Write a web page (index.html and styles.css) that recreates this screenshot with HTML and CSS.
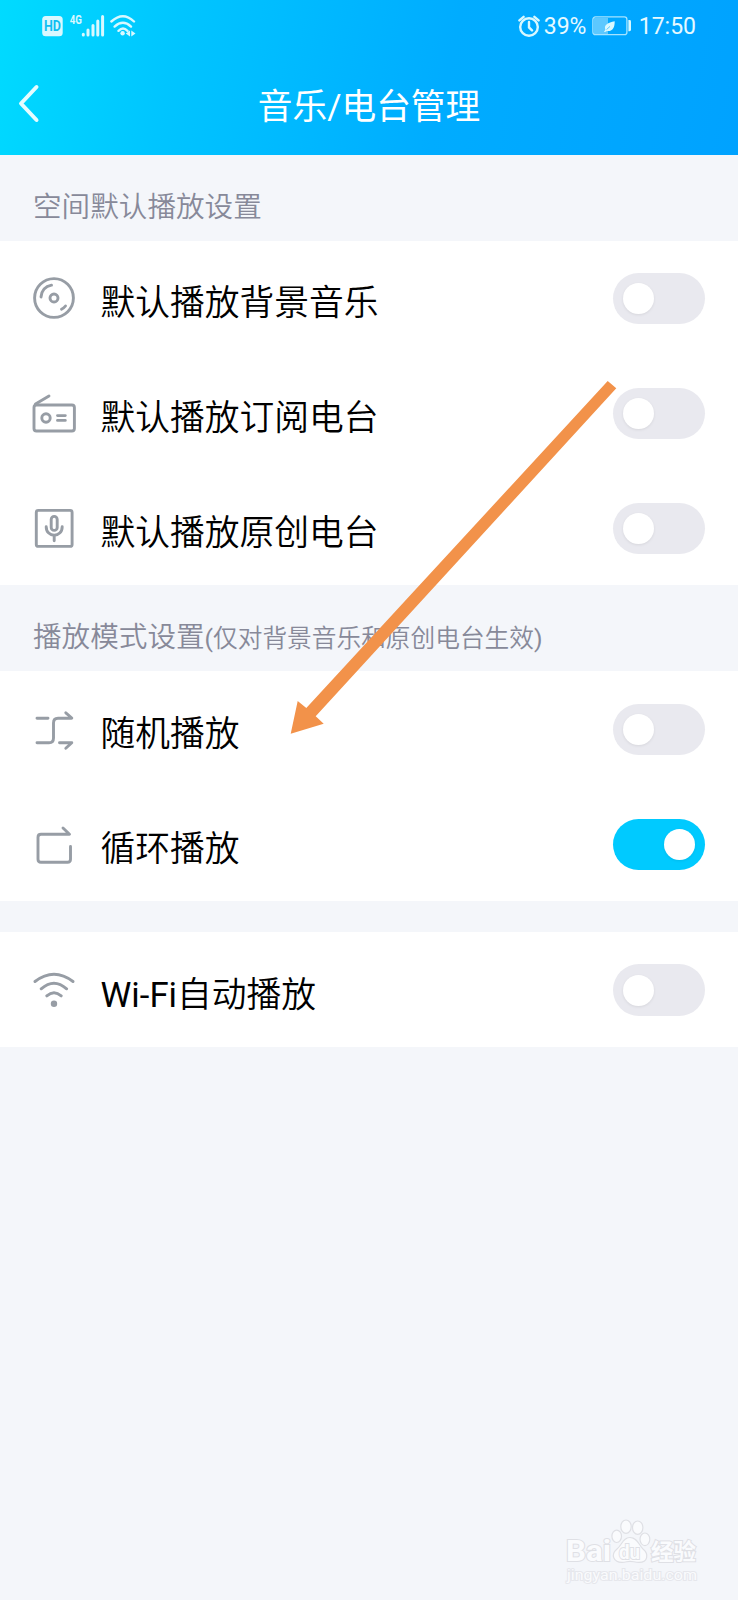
FILE: index.html
```html
<!DOCTYPE html>
<html lang="zh-CN">
<head>
<meta charset="UTF-8">
<meta name="viewport" content="width=device-width, initial-scale=1.0">
<title>音乐/电台管理</title>
<link rel="stylesheet" href="styles.css">
</head>
<body>
    <div class="page">
        <header class="header">
            <div class="status-bar">
                <svg class="status-left" width="96" height="28" viewBox="0 0 96 28">
                    <rect class="solid" x="2.2" y="4" width="20.5" height="20.3" rx="3.5"/>
                    <text class="hd" x="4" y="18.9" textLength="17" lengthAdjust="spacingAndGlyphs">HD</text>
                    <text class="net" x="29.8" y="12.4" textLength="12.2" lengthAdjust="spacingAndGlyphs">4G</text>
                    <path class="bars" d="M43.3 22.3v.6M48 18v4.9M53 13.5v9.4M57.8 9v13.9M62.6 4.6v18.3"/>
                    <path class="waves" d="M71.4 9.5Q83 -1 94 9.5M74.6 14.6Q83 7 91 14.6M78.5 18.8Q83 14.4 87.5 18.8"/>
                    <circle class="solid" cx="82.6" cy="21.3" r="2.2"/>
                    <path class="solid" d="M90 18.4v6l-4.2-3zM91.3 18.4v6l4.2-3z"/>
                </svg>
                <div class="status-right">
                    <svg width="22" height="24" viewBox="0 0 22 24">
                        <circle class="clock" cx="11" cy="13" r="8.8"/>
                        <path class="clock" d="M11 8v5.4l3 3M1.4 6.4l4.2-3.6M20.6 6.4l-4.2-3.6"/>
                    </svg>
                    <span class="percent">39%</span>
                    <svg class="battery" width="40" height="20" viewBox="0 0 40 20">
                        <rect class="battery-level" x="2" y="2" width="14" height="16"/>
                        <rect class="battery-body" x=".9" y=".9" width="34" height="17.8" rx="2.5"/>
                        <path class="solid" d="M36.4 4h1.2q1.4 0 1.4 1.4v8.4q0 1.4-1.4 1.4h-1.2z"/>
                        <path class="solid" d="M12 16l1.4-2.4C11.5 9 16 6.5 22.7 5.2C22.8 11.5 20.5 15.8 15 14.9L13 16z"/>
                        <path class="leaf-vein" d="M14.5 13.6l3.5-3.2"/>
                    </svg>
                    <span class="time">17:50</span>
                </div>
            </div>
            <div class="nav">
                <svg class="back" width="22" height="40" viewBox="0 0 22 40">
                    <path d="M18.5 4L3 20.5 18.5 37"/>
                </svg>
                <h1 class="title">音乐/电台管理</h1>
            </div>
        </header>

        <h2 class="group-title">空间默认播放设置</h2>
        <div class="group">
            <div class="row">
                <svg class="icon" viewBox="0 0 48 48">
                    <circle cx="24" cy="24" r="19.4"/>
                    <circle cx="24" cy="24" r="4"/>
                    <path d="M11 23Q12 13 21.5 11.2M31.5 35.2Q34 34 35.5 32"/>
                </svg>
                <span class="label">默认播放背景音乐</span>
                <span class="switch"></span>
            </div>
            <div class="row">
                <svg class="icon" viewBox="0 0 48 48">
                    <rect x="4" y="16" width="40.4" height="26" rx="2.5"/>
                    <path d="M5.5 15L19 7M27.5 26.6h7.8M27.5 31.4h7.8"/>
                    <circle cx="16" cy="29" r="4.2"/>
                </svg>
                <span class="label">默认播放订阅电台</span>
                <span class="switch"></span>
            </div>
            <div class="row">
                <svg class="icon" viewBox="0 0 48 48">
                    <rect x="6.3" y="6.4" width="35.8" height="36" rx="2"/>
                    <rect x="21.2" y="12.4" width="6" height="14" rx="3"/>
                    <path d="M16.2 22.7C16.2 34 32.2 34 32.2 22.7M24.2 31.5v5.2"/>
                </svg>
                <span class="label">默认播放原创电台</span>
                <span class="switch"></span>
            </div>
        </div>

        <h2 class="group-title">播放模式设置<small><span class="latin">(</span>仅对背景音乐和原创电台生效<span class="latin">)</span></small></h2>
        <div class="group">
            <div class="row">
                <svg class="icon" viewBox="0 0 48 48">
                    <path d="M7 13.2H18M41.5 13.2H28Q23.5 13.2 23.5 18V33Q23.5 37.8 19 37.8H7M35.8 7.8L41.8 13M29.5 37.8H41.8L35.8 43.3"/>
                </svg>
                <span class="label">随机播放</span>
                <span class="switch"></span>
            </div>
            <div class="row">
                <svg class="icon" viewBox="0 0 48 48">
                    <path d="M33 8l6.5 6.2H11Q8 14.2 8 17.2V39.2Q8 42.2 11 42.2H37.5Q40.5 42.2 40.5 39.2V26.5"/>
                </svg>
                <span class="label">循环播放</span>
                <span class="switch on"></span>
            </div>
        </div>

        <div class="group separate">
            <div class="row">
                <svg class="icon" viewBox="0 0 48 48">
                    <path d="M5 15.5Q24 1 43 15.5M11.2 22.8Q24 11.5 36.6 22.8M16.8 29.9Q24 23.5 31.2 29.9"/>
                    <circle class="dot" cx="24" cy="37.8" r="3.2"/>
                </svg>
                <span class="label"><span class="latin">Wi-Fi</span>自动播放</span>
                <span class="switch"></span>
            </div>
        </div>

        <!-- pointer to the shuffle row -->
        <svg class="arrow" width="328" height="356" viewBox="0 0 328 356">
            <path d="M317.7 3L326.3 10.3 25.7 338.3 33.7 345.7 .7 355.7 7.7 323 16.3 330z"/>
        </svg>

        <svg class="watermark" width="142" height="72" viewBox="0 0 142 72">
            <ellipse cx="59.7" cy="17.3" rx="4.8" ry="6.2"/>
            <ellipse cx="69" cy="7.7" rx="5.2" ry="6.7"/>
            <ellipse cx="80.7" cy="8.7" rx="5.2" ry="6.7"/>
            <ellipse cx="87.9" cy="20.3" rx="4.9" ry="6.3"/>
            <path d="M73 18.5C66 18.5 65 26 60 30C53 36 57 43.3 65 43.3C69 43.3 70 42.3 73 42.3C76 42.3 78 43.3 82 43.3C91 43.3 92 35 86 30C82 26 80 18.5 73 18.5Z"/>
            <text class="bai" x="9" y="42" textLength="45" lengthAdjust="spacingAndGlyphs">Bai</text>
            <text class="du" x="62" y="39.5" textLength="21" lengthAdjust="spacingAndGlyphs">du</text>
            <text class="jingyan" x="94" y="41">经验</text>
            <text class="url" x="10" y="60.5" textLength="130" lengthAdjust="spacingAndGlyphs">jingyan.baidu.com</text>
        </svg>
    </div>
</body>
</html>
```
FILE: styles.css
```css
body {
    margin: 0;
    background-color: #f4f6fa;
    font-family: Roboto, "Noto Sans CJK SC", sans-serif;
}

.page {
    position: relative;
    min-height: 1600px;
    overflow: hidden;
}

.header {
    height: 154.5px;
    background: linear-gradient(102deg, #00dbff 0%, #00c5ff 24%, #00acff 60%, #00a2ff 100%);
    color: #fff;
}

.status-bar {
    display: flex;
    justify-content: space-between;
    height: 52px;
    padding: 0 42px 0 40px;
}

.status-left {
    margin-top: 12px;
}

.status-right {
    display: flex;
    align-items: center;
    color: #e6f9ff;
    font-size: 23px;
}

.percent {
    margin-left: 4px;
    width: 48px;
}

.battery {
    width: 40px;
    margin-right: 7px;
}

.solid {
    fill: #d9f8ff;
}

.hd {
    fill: #10bff2;
    font-weight: 700;
    font-size: 14px;
}

.net {
    fill: #d9f8ff;
    font-weight: 700;
    font-size: 12.5px;
}

.bars,
.waves,
.clock {
    fill: none;
    stroke: #d9f8ff;
    stroke-width: 3;
    stroke-linecap: round;
}

.waves,
.clock {
    stroke-width: 2.4;
}

.battery-body {
    fill: none;
    stroke: #a5e3ff;
    stroke-width: 1.3;
}

.battery-level {
    fill: #5cc8ff;
}

.leaf-vein {
    fill: none;
    stroke: #5cc8ff;
}

.nav {
    display: grid;
    grid-template-columns: 60px 1fr 60px;
    align-items: center;
    height: 102px;
}

.back {
    margin-left: 18px;
    fill: none;
    stroke: #e6fcff;
    stroke-width: 4;
    stroke-linecap: round;
    stroke-linejoin: round;
}

.title {
    margin: 7px 0 0;
    font-size: 34.7px;
    font-weight: 400;
    line-height: 50px;
    text-align: center;
}

.group-title {
    box-sizing: border-box;
    height: 86px;
    margin: 0;
    padding: 31px 33px 0;
    color: #878999;
    font-size: 28.6px;
    font-weight: 350;
    line-height: 42px;
}

.group-title small {
    font-size: 24.7px;
}

.latin {
    font-weight: 400;
}

.group {
    background-color: #fff;
}

.separate {
    margin-top: 31px;
}

.row {
    box-sizing: border-box;
    display: flex;
    align-items: center;
    height: 114.9px;
    padding: 1.6px 33px 0 30px;
}

.icon {
    width: 48px;
    height: 48px;
    margin-bottom: 1px;
    fill: none;
    stroke: #979da5;
    stroke-width: 2.9;
    stroke-linecap: round;
    stroke-linejoin: round;
}

.icon .dot {
    fill: #979da5;
    stroke: none;
}

.label {
    flex: 1;
    margin: 8.8px 0 0 22.5px;
    color: #000;
    font-size: 34.75px;
    font-weight: 350;
    line-height: 50px;
}

.switch {
    box-sizing: border-box;
    width: 92px;
    height: 51.5px;
    padding: 10.2px;
    border-radius: 26px;
    background-color: #e9e9ef;
}

.switch::before {
    content: "";
    display: block;
    width: 31px;
    height: 31px;
    border-radius: 50%;
    background-color: #fff;
    box-shadow: 0 1px 3px rgba(0, 0, 0, 0.08);
}

.switch.on {
    background-color: #00caff;
}

.switch.on::before {
    margin-left: auto;
}

.arrow {
    position: absolute;
    left: 290px;
    top: 378px;
    fill: #f2924a;
}

.watermark {
    position: absolute;
    left: 557px;
    top: 1519px;
    fill: #fafbfd;
    stroke: #dfe0e5;
    stroke-width: 1.2;
}

.watermark text {
    paint-order: stroke;
    stroke-width: 2;
    font-weight: 700;
}

.watermark .bai {
    font-size: 29px;
}

.watermark .du {
    font-size: 21px;
}

.watermark .jingyan {
    font-size: 22.5px;
}

.watermark .url {
    font-size: 15px;
    font-weight: 400;
    stroke: #e6e7ec;
}
```
